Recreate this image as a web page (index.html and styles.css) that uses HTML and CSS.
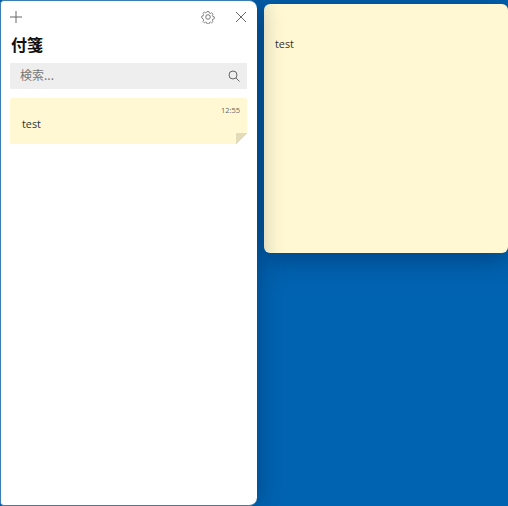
FILE: index.html
```html
<!DOCTYPE html>
<html lang="ja">
<head>
  <meta charset="UTF-8" />
  <title>付箋</title>
  <link rel="stylesheet" href="styles.css">
</head>
<body>

  <div class="window list-window">
    <div class="toolbar">
      <svg class="icon" width="12" height="12" viewBox="0 0 12 12"><path d="M6 0v12M0 6h12" /></svg>
      <div class="toolbar-right">
        <svg class="icon" width="14" height="14" viewBox="0 0 16 16">
          <circle cx="8" cy="8" r="2.6" />
          <path d="M6.7 1h2.6l.4 1.9 1.3.6 1.7-1 1.8 1.8-1 1.7.6 1.3 1.9.4v2.6l-1.9.4-.6 1.3 1 1.7-1.8 1.8-1.7-1-1.3.6-.4 1.9H6.7l-.4-1.9-1.3-.6-1.7 1-1.8-1.8 1-1.7-.6-1.3L0 9.3V6.7l1.9-.4.6-1.3-1-1.7 1.8-1.8 1.7 1 1.3-.6z" transform="translate(.9 .9) scale(.89)" />
        </svg>
        <svg class="icon" width="10" height="10" viewBox="0 0 10 10"><path d="M0 0l10 10M10 0L0 10" /></svg>
      </div>
    </div>

    <h1>付箋</h1>

    <div class="search">
      <span>検索...</span>
      <svg class="icon" width="12" height="12" viewBox="0 0 12 12"><circle cx="5" cy="5" r="4" /><path d="M8 8l3.5 3.5" /></svg>
    </div>

    <div class="note-card">
      <div class="note-time">12:55</div>
      <div class="note-text">test</div>
      <div class="note-fold"></div>
    </div>
  </div>

  <div class="window note-window">
    <p>test</p>
  </div>

</body>
</html>
```

FILE: styles.css
```css
html, body {
  height: 100%;
}
body {
  margin: 0;
  position: relative;
  overflow: hidden;
  background: #0063b1;
  font-family: "Open Sans", "Noto Sans CJK JP", sans-serif;
  color: #333;
}
.window {
  position: absolute;
  box-sizing: border-box;
}
.list-window {
  left: 0;
  top: 0;
  z-index: 2;
  width: 257px;
  height: 506px;
  padding: 0 10px 0 9px;
  background: #fff;
  border: 1px solid #3a7db3;
  border-right: 0;
  border-radius: 4px 8px 8px 4px;
  box-shadow: 0 0 26px rgba(0, 20, 50, 0.36);
}
.note-window {
  left: 264px;
  top: 4px;
  z-index: 1;
  width: 244px;
  height: 249px;
  padding: 32px 11px;
  background: #fff8d2;
  border-radius: 6px;
  box-shadow: 0 4px 28px rgba(0, 30, 70, 0.5);
}
.note-window p {
  margin: 0;
  font-size: 10.8px;
  line-height: 16px;
}
.icon {
  display: block;
  fill: none;
  stroke: #666;
  stroke-width: 1;
}
.toolbar {
  display: flex;
  justify-content: space-between;
  align-items: center;
  height: 31px;
}
.toolbar-right {
  display: flex;
  align-items: center;
  gap: 21px;
  padding-right: 1px;
}
h1 {
  margin: 0;
  padding: 2px 0 0 1px;
  font-family: "Noto Sans CJK JP", sans-serif;
  font-size: 16px;
  line-height: 20px;
  font-weight: 700;
  color: #111;
}
.search {
  display: flex;
  justify-content: space-between;
  align-items: flex-start;
  box-sizing: border-box;
  height: 26px;
  margin-top: 9px;
  padding: 5px 7px 0 10px;
  background: #eee;
  font-family: "Noto Sans CJK JP", sans-serif;
  font-size: 12px;
  line-height: 14px;
  color: #777;
}
.search .icon {
  margin-top: 2px;
}
.note-card {
  position: relative;
  box-sizing: border-box;
  height: 46px;
  margin-top: 9px;
  padding: 7px 7px 0 12px;
  background: #fff8d2;
  border-radius: 2px;
}
.note-time {
  text-align: right;
  font-size: 7.5px;
  line-height: 11px;
  color: #666;
}
.note-text {
  font-size: 10.8px;
  line-height: 16px;
}
.note-fold {
  position: absolute;
  right: 0;
  bottom: 0;
  width: 11px;
  height: 11px;
  background: linear-gradient(135deg, #e4dcb8 50%, #fff 50%);
}
```
